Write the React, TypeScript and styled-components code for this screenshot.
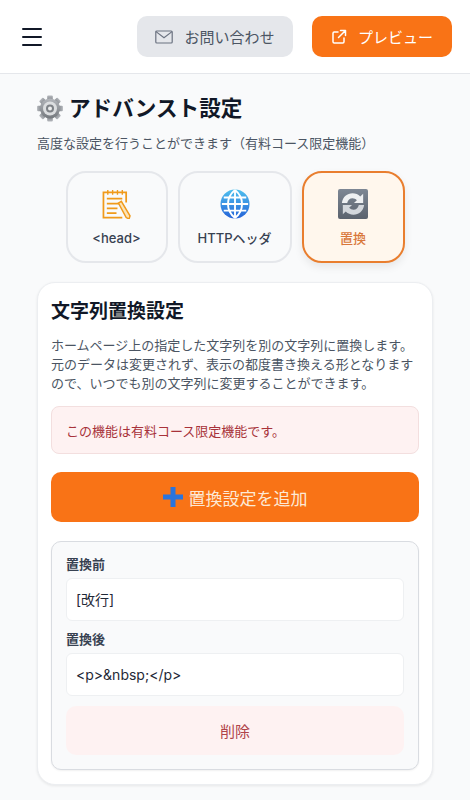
import { ReactNode } from 'react';
import styled, { createGlobalStyle } from 'styled-components';

const GlobalStyle = createGlobalStyle`
    * {
        box-sizing: border-box;
    }
    html,
    body {
        margin: 0;
        padding: 0;
        background-color: #f9fafb;
        font-family: Inter, 'Noto Sans CJK JP', sans-serif;
    }
`;

const MailIcon = () => (
    <svg width="18" height="14" viewBox="0 0 18 14" fill="none" stroke="#6b7280" strokeWidth="1.2">
        <rect x="0.8" y="1" width="16.4" height="12" rx="1" />
        <path d="M1 1.6l8 6.2 8-6.2" />
    </svg>
);

const ExternalIcon = () => (
    <svg width="16" height="16" viewBox="0 0 16 16" fill="none" stroke="#fff" strokeWidth="1.5" strokeLinecap="round" strokeLinejoin="round">
        <path d="M7 3H3.2C2.5 3 2 3.5 2 4.2v8.6c0 .7.5 1.2 1.2 1.2h8.6c.7 0 1.2-.5 1.2-1.2V9" />
        <path d="M9.5 1.500h5v5M14.500 1.500L7.500 8.500" />
    </svg>
);

const gearTeeth = [0, 45, 90, 135, 180, 225, 270, 315];

const GearIcon = () => (
    <svg width="26" height="27" viewBox="0 0 26 27">
        <defs>
            <linearGradient id="gearFill" x1="0" y1="0" x2="0" y2="1">
                <stop offset="0" stopColor="#b4b7bc" />
                <stop offset="1" stopColor="#74787d" />
            </linearGradient>
        </defs>
        {gearTeeth.map((deg) => (
            <rect key={deg} x="10.2" y="0.6" width="5.6" height="6" rx="1" fill="url(#gearFill)" transform={`rotate(${deg} 13 13.5)`} />
        ))}
        <circle cx="13" cy="13.5" r="10" fill="url(#gearFill)" />
        <circle cx="13" cy="13.5" r="7" fill="#dcdee0" />
        <circle cx="13" cy="13.5" r="4" fill="#7d8186" />
        <circle cx="13" cy="13.5" r="2" fill="#eceded" />
    </svg>
);

const MemoIcon = () => (
    <svg width="29" height="30" viewBox="0 0 30 31" fill="none" stroke="#f09a1a" strokeWidth="1.8">
        <path d="M25 14V3.500H1.500v26H21" />
        <path d="M6 1v5M11 1v5M16 1v5M21 1v5" strokeWidth="1.4" />
        <path d="M5 10h16M5 15h13M5 20h11M5 25h10" />
        <path d="M17 14.500l3-1.800 9 15-1 3.300-3-1.500z" fill="#fbe3b8" strokeWidth="1.5" />
    </svg>
);

const globeLines = 'M2 16h28M4 9h24M4 23h24M16 1v30M16 1c-10 8-10 22 0 30M16 1c10 8 10 22 0 30';

const GlobeIcon = () => (
    <svg width="30" height="30" viewBox="0 0 32 32" fill="none">
        <defs>
            <linearGradient id="globeFill" x1="0" y1="0" x2="0" y2="1">
                <stop offset="0" stopColor="#4fc0ee" />
                <stop offset="1" stopColor="#2563d8" />
            </linearGradient>
        </defs>
        <circle cx="16" cy="16" r="15.500" fill="url(#globeFill)" />
        <path d={globeLines} stroke="#fff" strokeWidth="2" />
    </svg>
);

const SwapIcon = () => (
    <svg width="30" height="30" viewBox="0 0 31 31">
        <defs>
            <linearGradient id="swapFill" x1="0" y1="0" x2="0" y2="1">
                <stop offset="0" stopColor="#7d8794" />
                <stop offset="1" stopColor="#5b636e" />
            </linearGradient>
        </defs>
        <rect width="31" height="31" rx="2" fill="url(#swapFill)" />
        <path d="M4 14.500C5 8 9.500 4.500 15 4.500c3.200 0 5.800 1 8 3.200L26 5v9.500h-9.500l3-3c-1.300-1.300-2.800-2-4.500-2-2.800 0-4.800 1.800-5.500 5z" fill="#eef0f2" />
        <path d="M27 16.500C26 23 21.500 26.500 16 26.500c-3.200 0-5.800-1-8-3.200L5 26v-9.500h9.500l-3 3c1.300 1.300 2.800 2 4.500 2 2.800 0 4.800-1.800 5.500-5z" fill="#d3d7dc" />
    </svg>
);

const PlusIcon = () => (
    <svg width="20" height="20" viewBox="0 0 20 20">
        <path d="M7.500 0h5v7.500H20v5h-7.500V20h-5v-7.500H0v-5h7.500z" fill="#2b74dc" />
    </svg>
);

interface TabProps {
    icon: ReactNode;
    label: string;
    width: number;
    active?: boolean;
}

const Tab = ({ icon, label, width, active }: TabProps) => (
    <TabBox $width={width} $active={active}>
        <TabIcon>{icon}</TabIcon>
        <TabLabel $active={active}>{label}</TabLabel>
    </TabBox>
);

const App = () => {
    return (
        <>
            <GlobalStyle />
            <Header>
                <Hamburger aria-label="menu">
                    <span />
                    <span />
                    <span />
                </Hamburger>
                <HeaderActions>
                    <ContactButton>
                        <MailIcon />
                        お問い合わせ
                    </ContactButton>
                    <PreviewButton>
                        <ExternalIcon />
                        プレビュー
                    </PreviewButton>
                </HeaderActions>
            </Header>
            <Main>
                <PageTitle>
                    <GearIcon />
                    アドバンスト設定
                </PageTitle>
                <PageLead>高度な設定を行うことができます（有料コース限定機能）</PageLead>
                <Tabs>
                    <Tab icon={<MemoIcon />} label="<head>" width={102} />
                    <Tab icon={<GlobeIcon />} label="HTTPヘッダ" width={114} />
                    <Tab icon={<SwapIcon />} label="置換" width={103} active />
                </Tabs>
                <Card>
                    <CardTitle>文字列置換設定</CardTitle>
                    <CardText>
                        ホームページ上の指定した文字列を別の文字列に置換します。元のデータは変更されず、表示の都度書き換える形となりますので、いつでも別の文字列に変更することができます。
                    </CardText>
                    <Alert>この機能は有料コース限定機能です。</Alert>
                    <AddButton>
                        <PlusIcon />
                        置換設定を追加
                    </AddButton>
                    <RuleBox>
                        <FieldLabel>置換前</FieldLabel>
                        <FieldInput defaultValue="[改行]" />
                        <FieldLabel>置換後</FieldLabel>
                        <FieldInput defaultValue={'<p>&nbsp;</p>'} />
                        <DeleteButton>削除</DeleteButton>
                    </RuleBox>
                </Card>
            </Main>
        </>
    );
};

const Header = styled.header`
    height: 74px;
    display: flex;
    align-items: center;
    justify-content: space-between;
    padding: 0 18px 0 22px;
    background-color: #fff;
    border-bottom: 1px solid #e5e7eb;
`;
const Hamburger = styled.div`
    width: 20px;
    display: flex;
    flex-direction: column;
    gap: 6px;
    span {
        display: block;
        height: 2px;
        background-color: #111827;
        border-radius: 1px;
    }
`;
const HeaderActions = styled.div`
    display: flex;
    gap: 19px;
`;
const HeaderButton = styled.button`
    height: 41px;
    display: flex;
    align-items: center;
    justify-content: center;
    gap: 11px;
    border: 0;
    border-radius: 10px;
    font-family: inherit;
    font-size: 15px;
`;
const ContactButton = styled(HeaderButton)`
    width: 156px;
    background-color: #e5e7eb;
    color: #4b5563;
`;
const PreviewButton = styled(HeaderButton)`
    width: 140px;
    background-color: #f97316;
    color: #fff;
`;
const Main = styled.main`
    padding: 20px 37px 16px;
`;
const PageTitle = styled.h1`
    margin: 0;
    display: flex;
    align-items: center;
    gap: 6px;
    height: 28px;
    font-size: 21.6px;
    line-height: 28px;
    font-weight: 700;
    color: #111827;
`;
const PageLead = styled.p`
    margin: 11px 0 0;
    font-size: 13px;
    line-height: 20px;
    color: #4b5563;
`;
const Tabs = styled.div`
    display: flex;
    justify-content: center;
    gap: 10px;
    margin-top: 18px;
`;
const TabBox = styled.div<{ $width: number; $active?: boolean }>`
    width: ${({ $width }) => $width}px;
    height: 92px;
    display: flex;
    flex-direction: column;
    align-items: center;
    border-radius: 20px;
    border: 2px solid ${({ $active }) => ($active ? '#e97e2e' : '#e5e7eb')};
    background-color: ${({ $active }) => ($active ? '#fff7ed' : '#f9fafb')};
    box-shadow: ${({ $active }) => ($active ? '0 4px 8px rgba(0, 0, 0, 0.08)' : 'none')};
`;
const TabIcon = styled.div`
    height: 31px;
    margin-top: 15px;
    display: flex;
    align-items: center;
    justify-content: center;
`;
const TabLabel = styled.span<{ $active?: boolean }>`
    margin-top: 9px;
    font-size: 13px;
    line-height: 20px;
    font-weight: 500;
    color: ${({ $active }) => ($active ? '#d9773a' : '#374151')};
`;
const Card = styled.section`
    margin-top: 19px;
    padding: 15px 13px 14px;
    background-color: #fff;
    border: 1px solid #eceef1;
    border-radius: 18px;
    box-shadow: 0 1px 3px rgba(0, 0, 0, 0.08);
`;
const CardTitle = styled.h2`
    margin: 0;
    font-size: 19px;
    line-height: 28px;
    font-weight: 700;
    color: #111827;
`;
const CardText = styled.p`
    margin: 10px 0 0;
    font-size: 13px;
    line-height: 19px;
    color: #4b5563;
`;
const Alert = styled.div`
    margin-top: 13px;
    height: 48px;
    display: flex;
    align-items: center;
    padding: 0 14px;
    background-color: #fef2f2;
    border: 1px solid #f3dfdf;
    border-radius: 8px;
    font-size: 13px;
    color: #a8323a;
`;
const AddButton = styled.button`
    margin-top: 18px;
    width: 100%;
    height: 50px;
    display: flex;
    align-items: center;
    justify-content: center;
    gap: 6px;
    border: 0;
    border-radius: 10px;
    background-color: #f97316;
    color: #fde9d5;
    font-family: inherit;
    font-size: 17px;
`;
const RuleBox = styled.div`
    margin-top: 19px;
    padding: 14px 14px 14px;
    background-color: #f9fafb;
    border: 1px solid #d9dce1;
    border-radius: 10px;
    box-shadow: 0 1px 2px rgba(0, 0, 0, 0.06);
`;
const FieldLabel = styled.label`
    display: block;
    font-size: 13px;
    line-height: 17px;
    font-weight: 700;
    color: #374151;
`;
const FieldInput = styled.input`
    display: block;
    width: 100%;
    height: 43px;
    margin: 5px 0 10px;
    padding: 0 9px 1px;
    background-color: #fff;
    border: 1px solid #eef0f2;
    border-radius: 6px;
    font-family: inherit;
    font-size: 14px;
    color: #1f2937;
`;
const DeleteButton = styled.button`
    display: block;
    width: 100%;
    height: 49px;
    border: 0;
    border-radius: 10px;
    background-color: #fef2f2;
    color: #b0444a;
    font-family: inherit;
    font-size: 15px;
`;

export default App;
